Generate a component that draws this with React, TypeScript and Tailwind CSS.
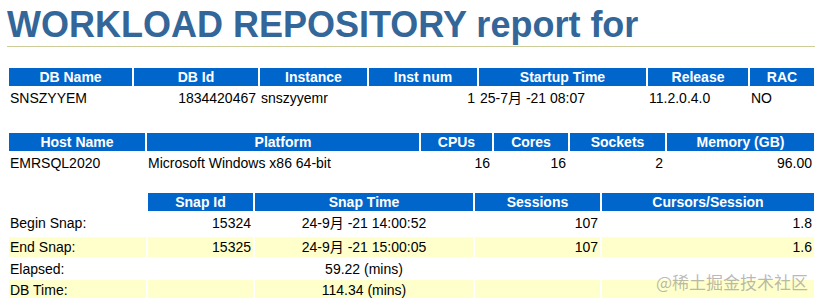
const font = "font-['Liberation_Sans','Noto_Sans_CJK_SC',sans-serif]"

// header cell
const th = 'bg-[#0066cc] text-white font-bold text-[14px] leading-[16px] px-[4px] pt-[1px] pb-[1px] text-center align-middle'
// data cells
const tdL = 'align-top text-left text-[14px] leading-[16px] pl-[1px] pr-[2px] pt-[2px] pb-0'
const tdR = 'align-top text-right text-[14px] leading-[16px] pl-[1px] pr-[2px] pt-[2px] pb-0'
const tdC = 'align-top text-center text-[14px] leading-[16px] px-[1px] pt-[2px] pb-0'

const tbl = 'table-fixed w-[809px] border-separate border-spacing-[2px]'

export default function App() {
  return (
    <div className={`relative min-h-[304px] bg-white px-[7px] pt-[4px] text-black ${font}`}>
      <h1 className="m-0 border-b border-[#cccc99] text-[36px] leading-[42px] font-bold text-[#336699] whitespace-nowrap">
        WORKLOAD REPOSITORY report for
      </h1>

      {/* DB 정보 */}
      <table className={`mt-[19px] ${tbl}`}>
        <thead>
          <tr className="h-[18px]">
            <th className={`${th} w-[123px]`}>DB Name</th>
            <th className={`${th} w-[124px]`}>DB Id</th>
            <th className={`${th} w-[107px]`}>Instance</th>
            <th className={`${th} w-[108px]`}>Inst num</th>
            <th className={`${th} w-[167px]`}>Startup Time</th>
            <th className={`${th} w-[100px]`}>Release</th>
            <th className={`${th} w-[64px]`}>RAC</th>
          </tr>
        </thead>
        <tbody>
          <tr className="h-[20px]">
            <td className={tdL}>SNSZYYEM</td>
            <td className={tdR}>1834420467</td>
            <td className={tdL}>snszyyemr</td>
            <td className={tdR}>1</td>
            <td className={tdL}>25-7月 -21 08:07</td>
            <td className={tdL}>11.2.0.4.0</td>
            <td className={tdL}>NO</td>
          </tr>
        </tbody>
      </table>

      {/* 호스트 정보 */}
      <table className={`mt-[21px] ${tbl}`}>
        <thead>
          <tr className="h-[18px]">
            <th className={`${th} w-[136px]`}>Host Name</th>
            <th className={`${th} w-[272px]`}>Platform</th>
            <th className={`${th} w-[71px]`}>CPUs</th>
            <th className={`${th} w-[74px]`}>Cores</th>
            <th className={`${th} w-[95px]`}>Sockets</th>
            <th className={`${th} w-[147px]`}>Memory (GB)</th>
          </tr>
        </thead>
        <tbody>
          <tr className="h-[19px]">
            <td className={tdL}>EMRSQL2020</td>
            <td className={tdL}>Microsoft Windows x86 64-bit</td>
            <td className={tdR}>16</td>
            <td className={tdR}>16</td>
            <td className={tdR}>2</td>
            <td className={tdR}>96.00</td>
          </tr>
        </tbody>
      </table>

      {/* 스냅샷 정보 */}
      <table className={`mt-[17px] ${tbl}`}>
        <thead>
          <tr className="h-[18px]">
            <th className="w-[137px] p-0"></th>
            <th className={`${th} w-[105px]`}>Snap Id</th>
            <th className={`${th} w-[218px]`}>Snap Time</th>
            <th className={`${th} w-[125px]`}>Sessions</th>
            <th className={`${th} w-[212px]`}>Cursors/Session</th>
          </tr>
        </thead>
        <tbody>
          <tr className="h-[22px]">
            <td className={tdL}>Begin Snap:</td>
            <td className={tdR}>15324</td>
            <td className={tdC}>24-9月 -21 14:00:52</td>
            <td className={tdR}>107</td>
            <td className={tdR}>1.8</td>
          </tr>
          <tr className="h-[20px] bg-[#ffffcc]">
            <td className={tdL}>End Snap:</td>
            <td className={tdR}>15325</td>
            <td className={tdC}>24-9月 -21 15:00:05</td>
            <td className={tdR}>107</td>
            <td className={tdR}>1.6</td>
          </tr>
          <tr className="h-[19px]">
            <td className={tdL}>Elapsed:</td>
            <td className={tdR}></td>
            <td className={tdC}>59.22 (mins)</td>
            <td className={tdR}></td>
            <td className={tdR}></td>
          </tr>
          <tr className="h-[18px] bg-[#ffffcc]">
            <td className={tdL}>DB Time:</td>
            <td className={tdR}></td>
            <td className={tdC}>114.34 (mins)</td>
            <td className={tdR}></td>
            <td className={tdR}></td>
          </tr>
        </tbody>
      </table>

      {/* 워터마크 */}
      <div className="absolute left-[656px] top-[272px] text-[17px] leading-[20px] text-[#8a8a8a]/60 font-['Noto_Sans_CJK_SC',sans-serif] whitespace-nowrap">
        @稀土掘金技术社区
      </div>
    </div>
  )
}
